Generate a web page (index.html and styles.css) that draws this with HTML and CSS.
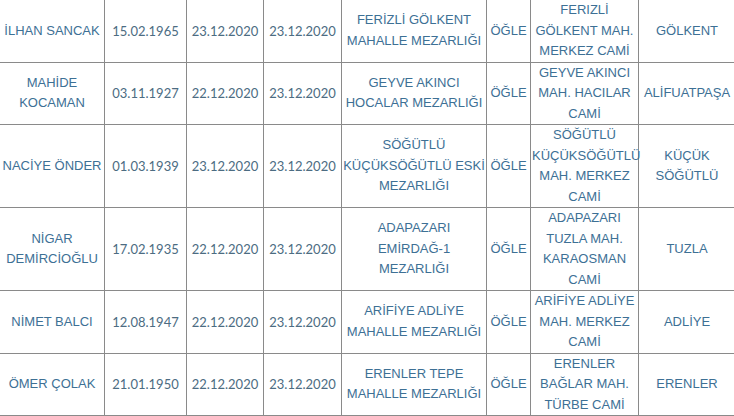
FILE: index.html
```html
<!DOCTYPE html>
<html lang="tr">
<head>
<meta charset="utf-8">
<title>Vefat Listesi</title>
<link rel="stylesheet" href="styles.css">
</head>
<body>
<table class="list">
  <colgroup>
    <col class="c-name"><col class="c-date"><col class="c-date2"><col class="c-date3"><col class="c-cem"><col class="c-time"><col class="c-mosque"><col class="c-place">
  </colgroup>
  <tbody>
    <tr>
      <td class="txt">İLHAN SANCAK</td>
      <td class="num">15.02.1965</td>
      <td class="num">23.12.2020</td>
      <td class="num">23.12.2020</td>
      <td class="txt">FERİZLİ GÖLKENT<br>MAHALLE MEZARLIĞI</td>
      <td class="txt">ÖĞLE</td>
      <td class="txt">FERIZLİ<br>GÖLKENT MAH.<br>MERKEZ CAMİ</td>
      <td class="txt">GÖLKENT</td>
    </tr>
    <tr>
      <td class="txt">MAHİDE<br>KOCAMAN</td>
      <td class="num">03.11.1927</td>
      <td class="num">22.12.2020</td>
      <td class="num">23.12.2020</td>
      <td class="txt">GEYVE AKINCI<br>HOCALAR MEZARLIĞI</td>
      <td class="txt">ÖĞLE</td>
      <td class="txt">GEYVE AKINCI<br>MAH. HACILAR<br>CAMİ</td>
      <td class="txt">ALİFUATPAŞA</td>
    </tr>
    <tr>
      <td class="txt">NACİYE ÖNDER</td>
      <td class="num">01.03.1939</td>
      <td class="num">23.12.2020</td>
      <td class="num">23.12.2020</td>
      <td class="txt">SÖĞÜTLÜ<br>KÜÇÜKSÖĞÜTLÜ ESKİ<br>MEZARLIĞI</td>
      <td class="txt">ÖĞLE</td>
      <td class="txt">SÖĞÜTLÜ<br>KÜÇÜKSÖĞÜTLÜ<br>MAH. MERKEZ<br>CAMİ</td>
      <td class="txt">KÜÇÜK<br>SÖĞÜTLÜ</td>
    </tr>
    <tr>
      <td class="txt">NİGAR<br>DEMİRCİOĞLU</td>
      <td class="num">17.02.1935</td>
      <td class="num">22.12.2020</td>
      <td class="num">23.12.2020</td>
      <td class="txt">ADAPAZARI<br>EMİRDAĞ-1<br>MEZARLIĞI</td>
      <td class="txt">ÖĞLE</td>
      <td class="txt">ADAPAZARI<br>TUZLA MAH.<br>KARAOSMAN<br>CAMİ</td>
      <td class="txt">TUZLA</td>
    </tr>
    <tr>
      <td class="txt">NİMET BALCI</td>
      <td class="num">12.08.1947</td>
      <td class="num">22.12.2020</td>
      <td class="num">23.12.2020</td>
      <td class="txt">ARİFİYE ADLİYE<br>MAHALLE MEZARLIĞI</td>
      <td class="txt">ÖĞLE</td>
      <td class="txt">ARİFİYE ADLİYE<br>MAH. MERKEZ<br>CAMİ</td>
      <td class="txt">ADLİYE</td>
    </tr>
    <tr>
      <td class="txt">ÖMER ÇOLAK</td>
      <td class="num">21.01.1950</td>
      <td class="num">22.12.2020</td>
      <td class="num">23.12.2020</td>
      <td class="txt">ERENLER TEPE<br>MAHALLE MEZARLIĞI</td>
      <td class="txt">ÖĞLE</td>
      <td class="txt">ERENLER<br>BAĞLAR MAH.<br>TÜRBE CAMİ</td>
      <td class="txt">ERENLER</td>
    </tr>
  </tbody>
</table>
</body>
</html>
```

FILE: styles.css
```css
html, body {
  margin: 0;
  padding: 0;
  background: #ffffff;
  overflow: hidden;
}

body {
  font-family: Lato, "Liberation Sans", sans-serif;
  font-size: 13px;
  line-height: 20.5px;
  color: #4a6a80;
}

.list {
  border-collapse: collapse;
  table-layout: fixed;
  margin: -1px 0 0 -1px;
  width: 736px;
}

.list td {
  border: 1px solid #8a8a8a;
  padding: 0 1px;
  text-align: center;
  vertical-align: middle;
}

.c-name { width: 105px; }
.c-date { width: 82px; }
.c-date2 { width: 77px; }
.c-date3 { width: 78px; }
.c-cem { width: 145px; }
.c-time { width: 44px; }
.c-mosque { width: 108px; }
.c-place { width: 97px; }

.txt {
  font-family: "Liberation Sans", Arial, sans-serif;
  font-size: 13px;
  color: #3d7095;
}

.num {
  font-family: Lato, "Liberation Sans", sans-serif;
  font-size: 13px;
  font-weight: 400;
  color: #4c6c82;
}
```
